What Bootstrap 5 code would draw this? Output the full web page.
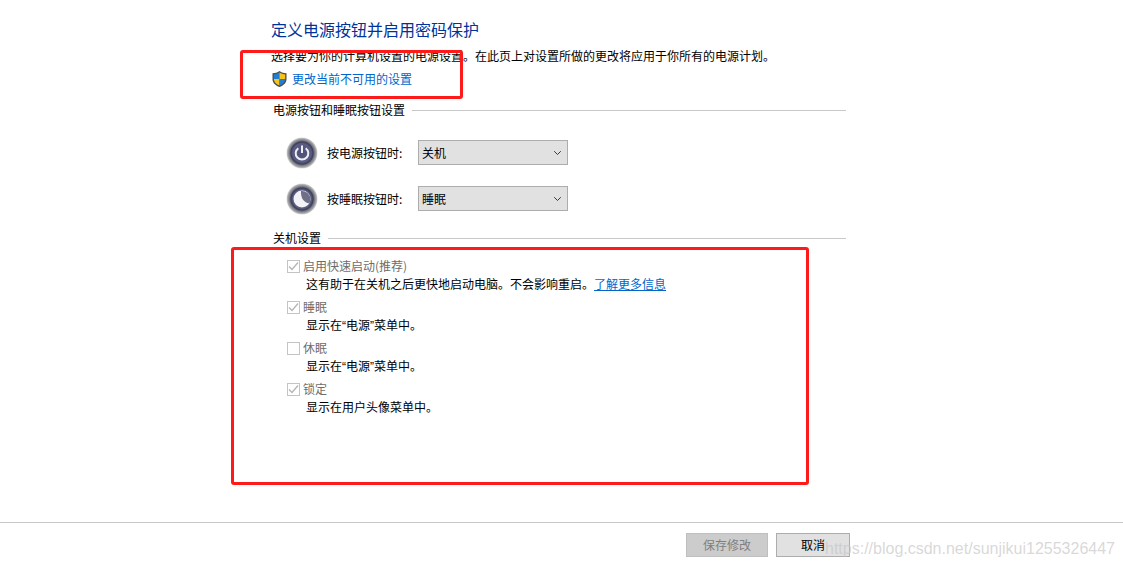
<!DOCTYPE html>
<html lang="zh-CN">
<head>
    <meta charset="UTF-8">
    <meta name="viewport" content="width=device-width, initial-scale=1.0">
    <title>定义电源按钮并启用密码保护</title>
    <link href="https://cdn.jsdelivr.net/npm/bootstrap@5.3.0/dist/css/bootstrap.min.css" rel="stylesheet">
    <style>
        html, body { height: 100%; }
        body {
            width: 1123px;
            height: 567px;
            overflow: hidden;
            position: relative;
            font-family: "Noto Sans CJK SC", "Liberation Sans", sans-serif;
            font-size: 12px;
            color: #000;
            background: #fff;
        }
        .page-main { height: 522px; padding: 19px 0 0 271px; }
        .page-title { font-size: 16px; line-height: 20px; font-weight: 400; color: #003399; margin: 0 0 9px; }
        .page-desc { line-height: 16px; margin: 0 0 5px; }
        .page-link { line-height: 20px; color: #0066cc; text-decoration: none; gap: 4px; }
        .page-link-inline { color: #0066cc; }
        .group-head { width: 575px; padding-left: 2px; line-height: 18px; gap: 7px; }
        .group-head::after { content: ""; flex: 1; border-top: 1px solid #c8c8c8; }
        .head-power { margin-top: 12px; }
        .head-off { margin-top: 18px; }
        .button-rows { padding: 21px 0 0 15px; gap: 21px; }
        .button-row { height: 25px; }
        .button-row svg { margin-right: 9px; }
        .button-label { width: 91px; }
        .win-select {
            width: 150px;
            height: 25px;
            padding: 0 0 0 3px;
            font-size: 12px;
            color: #000;
            background-color: #e1e1e1;
            background-position: right 4px center;
            background-size: 11px 8px;
            border: 1px solid #adadad;
            border-radius: 0;
            font-family: inherit;
        }
        .check-list { padding: 9px 0 0 16px; gap: 3px; }
        .check-title { line-height: 20px; color: #6d6d6d; gap: 3px; }
        .check-desc { line-height: 18px; padding-left: 19px; font-family: "Liberation Sans", "Noto Sans CJK SC", sans-serif; }
        .form-check-input.win-check {
            width: 13px;
            height: 13px;
            margin: 0;
            opacity: 1;
            border: 1px solid #c4c4c4;
            border-radius: 0;
            background-color: #fff;
        }
        .form-check-input.win-check:checked {
            background-color: #fff;
            background-image: url("data:image/svg+xml,%3csvg xmlns='http://www.w3.org/2000/svg' viewBox='0 0 13 13'%3e%3cpath fill='none' stroke='%23b4b4b4' stroke-width='1.3' d='M2 6.5l3 3 6-7'/%3e%3c/svg%3e");
            background-size: 13px 13px;
        }
        .page-foot { height: 45px; border-top: 1px solid #c8c8c8; padding: 10px 273px 0 686px; gap: 8px; }
        .win-btn {
            height: 24px;
            padding: 0;
            font-size: 12px;
            line-height: 20px;
            border-radius: 0;
            --bs-btn-disabled-opacity: 1;
        }
        .btn-save { width: 82px; background: #cccccc; border: 1px solid #bfbfbf; color: #7f7f7f; }
        .btn-save:disabled { background: #cccccc; border: 1px solid #bfbfbf; color: #7f7f7f; }
        .btn-cancel { width: 74px; background: #e1e1e1; border: 1px solid #adadad; color: #000; }
        .mark-box { position: absolute; border: 3px solid #ff1a1a; border-radius: 3px; pointer-events: none; }
        .mark-top { left: 240px; top: 50px; width: 223px; height: 49px; }
        .mark-bottom { left: 231px; top: 247px; width: 578px; height: 238px; }
        .watermark {
            position: absolute;
            left: 825px;
            top: 539px;
            font-family: "Liberation Sans", Arial, sans-serif;
            font-size: 16px;
            line-height: 20px;
            color: rgba(196, 196, 196, .66);
            white-space: nowrap;
        }
    </style>
</head>
<body>
    <svg width="0" height="0" class="position-absolute">
        <defs>
            <radialGradient id="ringFill" cx="50%" cy="50%" r="50%">
                <stop offset="0" stop-color="#4e5076"/>
                <stop offset=".6" stop-color="#5a5c84"/>
                <stop offset=".72" stop-color="#3c3d55"/>
                <stop offset=".78" stop-color="#6e6e78"/>
                <stop offset=".93" stop-color="#adadb2"/>
                <stop offset="1" stop-color="#dcdcde"/>
            </radialGradient>
        </defs>
    </svg>

    <div class="page-main">
        <h1 class="page-title">定义电源按钮并启用密码保护</h1>
        <p class="page-desc">选择要为你的计算机设置的电源设置。在此页上对设置所做的更改将应用于你所有的电源计划。</p>
        <a href="#" class="page-link d-flex align-items-center">
            <svg width="17" height="18" viewBox="0 0 17 18">
                <path d="M8.5 1C6.5 2.6 4 3.2 1.5 3.2v6c0 3.6 3 6.2 7 7.8 4-1.6 7-4.2 7-7.8v-6C13 3.2 10.500 2.600 8.500 1z" fill="#4d4d4d"/>
                <path d="M8.500 2.400V9H2.800V4.300c2.200-.1 4-.7 5.700-1.900z" fill="#1f7fd6"/>
                <path d="M8.500 2.400V9h5.700V4.300c-2.200-.1-4-.7-5.700-1.900z" fill="#f8c21c"/>
                <path d="M2.800 9h5.700v6.500C5.300 14.200 3 12.200 2.800 9z" fill="#f8c21c"/>
                <path d="M14.200 9H8.500v6.500c3.200-1.300 5.500-3.300 5.700-6.500z" fill="#1f7fd6"/>
            </svg>
            更改当前不可用的设置
        </a>

        <div class="group-head head-power d-flex align-items-center">电源按钮和睡眠按钮设置</div>
        <div class="button-rows d-flex flex-column">
            <div class="button-row d-flex align-items-center">
                <svg width="32" height="32" viewBox="0 0 32 32">
                    <circle cx="16" cy="16" r="15.500" fill="url(#ringFill)"/>
                    <path d="M12.300 11.200a6.300 6.300 0 1 0 7.400 0" fill="none" stroke="#eeeef5" stroke-width="2"/>
                    <path d="M16 8.500v7.500" stroke="#eeeef5" stroke-width="2"/>
                </svg>
                <span class="button-label">按电源按钮时:</span>
                <select class="form-select win-select"><option>关机</option></select>
            </div>
            <div class="button-row d-flex align-items-center">
                <svg width="32" height="32" viewBox="0 0 32 32">
                    <circle cx="16" cy="16" r="15.500" fill="url(#ringFill)"/>
                    <circle cx="16" cy="16" r="8.500" fill="#f2f2f7"/>
                    <path d="M15 8a8.500 8.500 0 0 1 9.400 8.400c0 1.500-.4 2.800-1 3.900C18 20 14.500 15 15 8z" fill="#6f7088"/>
                </svg>
                <span class="button-label">按睡眠按钮时:</span>
                <select class="form-select win-select"><option>睡眠</option></select>
            </div>
        </div>

        <div class="group-head head-off d-flex align-items-center">关机设置</div>
        <div class="check-list d-flex flex-column">
            <div>
                <div class="check-title d-flex align-items-center">
                    <input class="form-check-input win-check" type="checkbox" checked disabled>
                    启用快速启动(推荐)
                </div>
                <div class="check-desc">这有助于在关机之后更快地启动电脑。不会影响重启。<a href="#" class="page-link-inline">了解更多信息</a></div>
            </div>
            <div>
                <div class="check-title d-flex align-items-center">
                    <input class="form-check-input win-check" type="checkbox" checked disabled>
                    睡眠
                </div>
                <div class="check-desc">显示在“电源”菜单中。</div>
            </div>
            <div>
                <div class="check-title d-flex align-items-center">
                    <input class="form-check-input win-check" type="checkbox" disabled>
                    休眠
                </div>
                <div class="check-desc">显示在“电源”菜单中。</div>
            </div>
            <div>
                <div class="check-title d-flex align-items-center">
                    <input class="form-check-input win-check" type="checkbox" checked disabled>
                    锁定
                </div>
                <div class="check-desc">显示在用户头像菜单中。</div>
            </div>
        </div>
    </div>

    <div class="page-foot d-flex align-items-start">
        <button class="btn win-btn btn-save" disabled>保存修改</button>
        <button class="btn win-btn btn-cancel">取消</button>
    </div>

    <div class="mark-box mark-top"></div>
    <div class="mark-box mark-bottom"></div>
    <div class="watermark">https://blog.csdn.net/sunjikui1255326447</div>

    <script src="https://cdn.jsdelivr.net/npm/bootstrap@5.3.0/dist/js/bootstrap.bundle.min.js"></script>
</body>
</html>
